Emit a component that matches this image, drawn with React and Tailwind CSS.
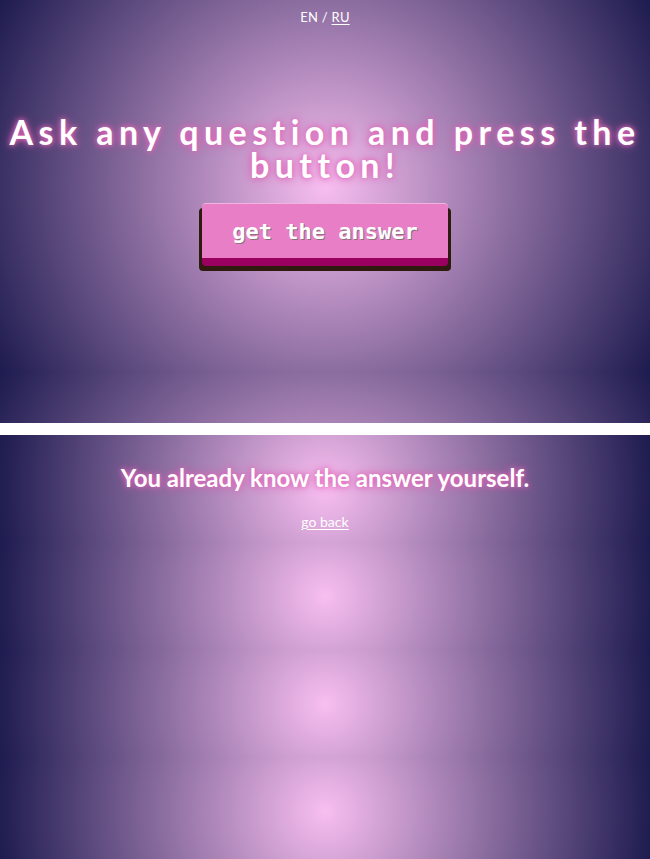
import React from 'react';

const glow = '[text-shadow:0_0_5px_#e86ac0,0_0_10px_#d45aaa]';

function AskScreen() {
  return (
    <section className="h-[423px] flex flex-col items-center bg-[radial-gradient(circle,#f8bef0,#1d1b4f)] bg-[length:100%_372px] bg-repeat-y">
      <div className="mt-[9px] text-[13px] leading-[16px] text-white tracking-[0.02em]">
        EN / <span className="underline underline-offset-2">RU</span>
      </div>

      <h1 className={`mt-[90px] text-center text-white font-bold text-[34px] leading-[33px] tracking-[0.16em] ${glow}`}>
        Ask any question and press the button!
      </h1>

      <button className="mt-[22px] w-[246px] h-[63px] rounded-[4px] bg-[#e87fc6] border-t border-[#f4b3de] border-b-[8px] border-b-[#99005f] shadow-[3px_5px_0_#2e1a0e,-3px_5px_0_#2e1a0e] text-white text-[22px] font-bold [font-family:'DejaVu_Sans_Mono',monospace] [text-shadow:1px_1px_0_#8a6f7c]">
        get the answer
      </button>
    </section>
  );
}

function AnswerScreen() {
  return (
    <section className="h-[424px] flex flex-col items-center bg-[radial-gradient(circle,#f8bef0,#1d1b4f)] bg-[length:100%_107.5px] bg-repeat-y">
      <h2 className={`mt-[29px] text-white font-bold text-[24px] leading-[28px] ${glow}`}>
        You already know the answer yourself.
      </h2>
      <a href="#" className="mt-[19px] text-[14px] text-white underline underline-offset-2">
        go back
      </a>
    </section>
  );
}

export default function App() {
  return (
    <div className="w-[650px] bg-white [font-family:'Lato','Noto_Sans',sans-serif]">
      <AskScreen />
      <div className="h-[12px] bg-white" />
      <AnswerScreen />
    </div>
  );
}
